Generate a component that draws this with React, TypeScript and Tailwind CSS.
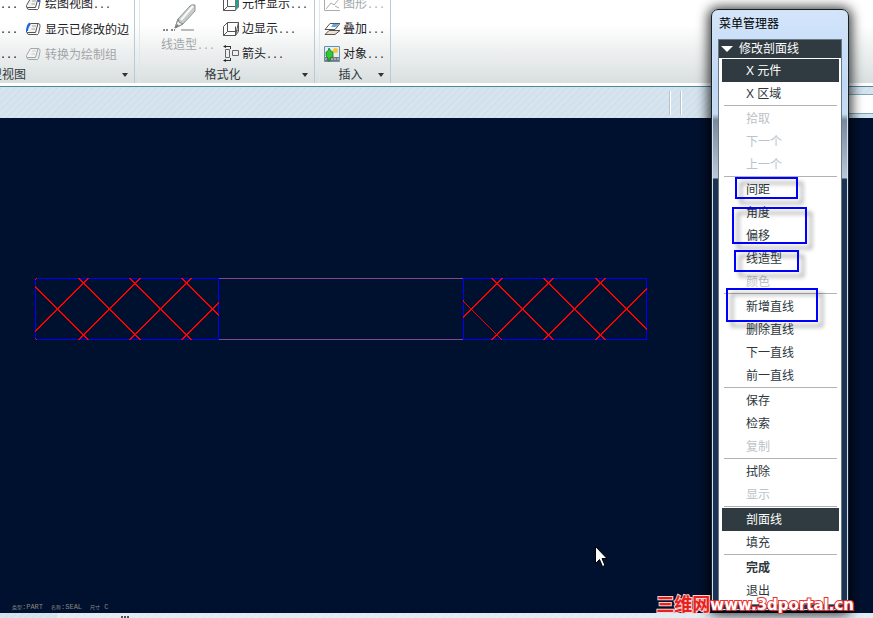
import React from "react";

const hatch =
  "bg-[repeating-linear-gradient(135deg,#d2e1eb_0px,#d2e1eb_3px,#d7e5ee_3px,#d7e5ee_5px)]";

function Dots() {
  return <span className="font-['Liberation_Mono',monospace] text-[10px]">...</span>;
}

function SheetIcon({ accent = "none" }: { accent?: "none" | "edge" | "plus" }) {
  return (
    <svg width="16" height="16" viewBox="0 0 16 16" fill="none" stroke={accent === "none" ? "#a1a6a8" : "#555"} aria-hidden="true">
      <path d="M4.500 2.500H12L9.500 11.500H1.500q-1.500 0-1-2z" fill="#f4f4f4" />
      <path d="M12 2.500q2.500 0 2 3l-1.500 7q-1 2-3 1M1 11q0 2.500 2 2.500h7" />
      <path d="M6 5h4M5.500 8H9" opacity=".5" />
      {accent === "edge" && <path d="M4 2.500Q1.500 3.500 1 10" stroke="#1667ee" strokeWidth="2" />}
      {accent === "plus" && <path d="M13 0v6M10 3h6" stroke="#2466dd" strokeWidth="2" />}
    </svg>
  );
}

function CubeIcon({ shaded = false }: { shaded?: boolean }) {
  return (
    <svg width="16" height="16" viewBox="0 0 16 16" fill="none" stroke="#555" aria-hidden="true">
      {shaded ? (
        <>
          <path d="M.5 2.500h12v12H.5zM4.500 0v10.500h8M.5 14.500l4-4" />
          <path d="M12.500 2l3-2v11l-3 3z" fill="#15a39a" stroke="#777" />
        </>
      ) : (
        <>
          <path d="M4.500 1.500h11L12.500 14.500H.5v-9z" fill="#fff" />
          <path d="M4.500 1.500v9h8l3-1M4.500 10.500l-4 4M12.500 5.500v9M15.500 1.500v9l-3 4" />
        </>
      )}
    </svg>
  );
}

function ArrowsIcon() {
  return (
    <svg width="16" height="17" viewBox="0 0 16 17" fill="none" stroke="#666" aria-hidden="true">
      <path d="M2.500 4.500h4v8h-4zM9.500 5.500h6v5h-6z" fill="#eee" />
      <path d="M1 1.500h6M1 15.500h6M7.500 1v3M7.500 13v3" stroke="#333" />
      <path d="M0 1.500L3 0v3zM0 15.500L3 14v3z" fill="#222" stroke="none" />
    </svg>
  );
}

function GraphIcon() {
  return (
    <svg width="16" height="16" viewBox="0 0 16 16" fill="none" stroke="#a8acaf" aria-hidden="true">
      <path d="M.5 0v14.500H16M2 13l5-6 3 2 5-6M11 10l4 2" />
    </svg>
  );
}

function OverlayIcon() {
  return (
    <svg width="16" height="16" viewBox="0 0 16 16" fill="none" stroke="#555" aria-hidden="true">
      <path d="M5 9.500h11l-5 4H1z" fill="#f1ded1" />
      <path d="M6 2.500h10L11 8.500H1z" fill="#fff" />
      <path d="M9 3h6l-3 3H7z" fill="#65a9e4" stroke="none" />
    </svg>
  );
}

function PictureIcon() {
  return (
    <svg width="16" height="16" viewBox="0 0 16 16" aria-hidden="true">
      <path d="M.5.5h15v15H.5z" fill="#dbeefa" stroke="#6b8dae" />
      <path d="M1 11h14v4H1z" fill="#777" />
      <path d="M1 13h14" stroke="#ddd" strokeDasharray="2 1" />
      <circle cx="11.500" cy="4.500" r="2.500" fill="#ffc42b" />
      <path d="M5 2l2 3 2 1v5l-3 1v3H4v-3L2 10V6l2-1z" fill="#32c832" stroke="#146819" strokeWidth=".7" />
    </svg>
  );
}

function PencilIcon() {
  return (
    <svg width="36" height="30" viewBox="0 0 36 30" aria-hidden="true">
      <path d="M2 27h6M10 27h4" stroke="#888" strokeWidth="2" strokeDasharray="2 1" />
      <path d="M20 27h13" stroke="#bbb" strokeWidth="2" />
      <path d="M14 25l3-9L29 3q2-2 5-1v6L22 21z" fill="#c8cbcb" stroke="#929696" />
      <path d="M20 17L32 3" stroke="#fafafa" strokeWidth="2" />
      <path d="M17 16l1 3 4 2-8 4z" fill="#eee" stroke="#888" />
      <path d="M14 25l4-2-2-2z" fill="#777" />
    </svg>
  );
}

function RibbonButton({ icon, label, dots = true, disabled = false }: {
  icon: React.ReactNode; label: string; dots?: boolean; disabled?: boolean;
}) {
  return (
    <button
      disabled={disabled}
      className="flex h-[25px] shrink-0 items-center gap-[3px] whitespace-nowrap text-[#1c2226] disabled:text-[#a1a6a8]"
    >
      {icon}
      <span className="pt-[2px]">{label}{dots && <Dots />}</span>
    </button>
  );
}

function GroupFooter({ label }: { label: string }) {
  return (
    <button className="flex h-[17px] w-full shrink-0 items-center pr-[6px] text-[#30373b]">
      <span className="flex-1 pl-[3px] text-center">{label}</span>
      <span className="border-x-[3px] border-t-4 border-x-transparent border-t-[#333]" />
    </button>
  );
}

const groupClass =
  "flex shrink-0 flex-col justify-end overflow-hidden border-r border-[#bacbd5]";

function Ribbon() {
  return (
    <header className="flex h-[83px] gap-1 overflow-hidden bg-linear-to-b from-white from-30% to-[#d9dfdf]">
      <section className={`${groupClass} w-[135px]`}>
        <div className="flex gap-[10px]">
          <div className="flex w-4 flex-col">
            {[0, 1, 2].map((i) => (
              <button key={i} aria-label="更多" className="h-[25px] pt-[2px] text-left"><Dots /></button>
            ))}
          </div>
          <div className="flex flex-col">
            <RibbonButton icon={<SheetIcon accent="plus" />} label="绘图视图" />
            <RibbonButton icon={<SheetIcon accent="edge" />} label="显示已修改的边" dots={false} />
            <RibbonButton icon={<SheetIcon />} label="转换为绘制组" dots={false} disabled />
          </div>
        </div>
        <button className="flex h-[17px] shrink-0 items-center justify-between pr-[6px] text-[#30373b]">
          <span className="-ml-[10px]">型视图</span>
          <span className="border-x-[3px] border-t-4 border-x-transparent border-t-[#333]" />
        </button>
      </section>
      <section className={`${groupClass} w-[176px] border-l border-l-[#e0e7eb]`}>
        <div className="flex justify-between pr-[6px] pl-[21px]">
          <button disabled className="flex flex-col items-start justify-end pb-[10px] leading-[18px] whitespace-nowrap text-[#a1a6a8]">
            <PencilIcon />
            <span className="pt-[3px]">线造型<Dots /></span>
          </button>
          <div className="flex flex-col">
            <RibbonButton icon={<CubeIcon shaded />} label="元件显示" />
            <RibbonButton icon={<CubeIcon />} label="边显示" />
            <RibbonButton icon={<ArrowsIcon />} label="箭头" />
          </div>
        </div>
        <GroupFooter label="格式化" />
      </section>
      <section className={`${groupClass} w-[72px] border-l border-l-[#e0e7eb]`}>
        <div className="flex flex-col pl-1">
          <RibbonButton icon={<GraphIcon />} label="图形" disabled />
          <RibbonButton icon={<OverlayIcon />} label="叠加" />
          <RibbonButton icon={<PictureIcon />} label="对象" />
        </div>
        <GroupFooter label="插入" />
      </section>
    </header>
  );
}

function Section({ id, x, width, centers }: { id: string; x: number; width: number; centers: number[] }) {
  return (
    <g fill="none">
      <clipPath id={id}><rect x={x} y="0" width={width} height="62" /></clipPath>
      <rect x={x + 0.5} y="0.5" width={width - 1} height="61" stroke="#0000ff" />
      <g clipPath={`url(#${id})`} stroke="#ff0000">
        {centers.map((c) => (
          <path key={c} d={`M${c - 40} -9l80 80M${c + 40} -9l-80 80`} />
        ))}
      </g>
    </g>
  );
}

function Drawing() {
  return (
    <svg width="613" height="62" viewBox="0 0 613 62" shapeRendering="crispEdges" role="img" aria-label="剖面图">
      <path d="M184 .5h244M184 61.500h244" stroke="#804a90" />
      <Section id="left-section" x={0} width={184} centers={[-29.2, 22.7, 74.3, 125.7, 177.7]} />
      <Section id="right-section" x={428} width={184} centers={[436.3, 487.7, 539.7, 591.3]} />
    </svg>
  );
}

type Item = { label: string; off?: boolean; active?: boolean; bold?: boolean };
const menu: Item[][] = [
  [{ label: "X 元件", active: true }, { label: "X 区域" }],
  [{ label: "拾取", off: true }, { label: "下一个", off: true }, { label: "上一个", off: true }],
  [{ label: "间距" }, { label: "角度" }, { label: "偏移" }, { label: "线造型" }, { label: "颜色", off: true }],
  [{ label: "新增直线" }, { label: "删除直线" }, { label: "下一直线" }, { label: "前一直线" }],
  [{ label: "保存" }, { label: "检索" }, { label: "复制", off: true }],
  [{ label: "拭除" }, { label: "显示", off: true }],
  [{ label: "剖面线", active: true }, { label: "填充" }],
  [{ label: "完成", bold: true }, { label: "退出" }],
];

const callout = "pointer-events-none absolute border-2 border-[#0000ff] drop-shadow-[5px_5px_2px_rgba(0,0,0,0.4)]";

function MenuManager() {
  return (
    <aside className="absolute top-[9px] right-6 w-[138px] rounded-[7px] border border-[#12202e] bg-[linear-gradient(180deg,#d3e5fa_0px,#bdd8f7_75px,#c5dcf5_104px,#78899f_110px,#b9c8da_168px,#1b3453_169px,#1b3453_100%)] px-[6px] pb-[5px] shadow-[0_1px_12px_3px_rgba(0,0,0,0.75)] ring-1 ring-[#d5e0e8] ring-inset">
      <h1 className="h-[29px] pl-[1px] leading-[29px] text-black">菜单管理器</h1>
      <div className="border border-[#6c7882] bg-[#303b41]">
        <h2 className="flex h-[18px] items-center gap-[6px] pl-[2px] text-white">
          <span className="border-x-[6px] border-t-[6px] border-x-transparent border-t-white" />
          修改剖面线
        </h2>
        <nav className="bg-white pt-[1px] pr-[2px] pb-[2px] pl-[3px]">
          {menu.map((group, gi) => (
            <div key={gi}>
              {gi > 0 && <hr className="mx-[2px] h-[2px] border-0 border-t border-[#b2b2b2]" />}
              {group.map((item) => (
                <button
                  key={item.label}
                  disabled={item.off}
                  className={`block h-[23px] w-full pl-6 text-left leading-[25px] ${
                    item.active ? "bg-[#303b41] text-white" : item.off ? "text-[#bcc3c8]" : "text-[#2d373d]"
                  } ${item.bold ? "font-bold" : ""}`}
                >
                  {item.label}
                </button>
              ))}
            </div>
          ))}
        </nav>
      </div>
      <span className={`${callout} top-[167px] left-[23px] h-[22px] w-[63px]`} />
      <span className={`${callout} top-[197px] left-5 h-[37px] w-[75px]`} />
      <span className={`${callout} top-[240px] left-[22px] h-[22px] w-[65px]`} />
      <span className={`${callout} top-[278px] left-[14px] h-[34px] w-[92px]`} />
    </aside>
  );
}

export default function App() {
  return (
    <div className="relative flex min-h-screen flex-col overflow-hidden bg-white font-['Liberation_Sans','Noto_Sans_CJK_SC',sans-serif] text-[12px] leading-[18px]">
      <Ribbon />
      <div className={`mt-[3px] flex h-8 items-center border-t border-[#4d86a3] ${hatch}`}>
        <div className="ml-auto flex h-6 gap-[9px] pr-[131px]">
          <span className="w-[2px] border-r border-l border-r-white border-l-[#b4c4ce]" />
          <span className="w-[2px] border-r border-l border-r-white border-l-[#b4c4ce]" />
        </div>
        <input aria-label="搜索" className="mt-[3px] h-5 w-[60px] border-y border-[#7ba7bc] bg-white" />
      </div>
      <main className="flex flex-1 flex-col justify-between bg-[#00112f] pt-40 pl-[35px]">
        <Drawing />
        <p className="-ml-[23px] flex gap-2 font-['Liberation_Mono','Noto_Sans_CJK_SC',monospace] text-[7px] leading-[10px] text-[#8b867e]">
          <span><span className="text-[5px]">类型</span>:PART</span>
          <span><span className="text-[5px]">名称</span>:SEAL</span>
          <span><span className="text-[5px]">尺寸</span> C</span>
        </p>
      </main>
      <footer className={`flex h-[5px] pl-[57px] ${hatch}`}>
        <div className="flex-1 bg-white/30 pt-[3px] pl-16"><span className="block w-2 border-t-2 border-dotted border-[#55504a]" /></div>
      </footer>
      <MenuManager />
      <svg className="absolute right-[266px] bottom-[50px]" width="12" height="22" viewBox="0 0 12 22" aria-hidden="true">
        <path d="M.5.5v17l4-4 3 7 2.500-1-3-7H12z" fill="#fff" stroke="#000" />
      </svg>
      <a
        href="#top"
        className="absolute right-[19px] bottom-1 flex items-center font-['DejaVu_Sans','Noto_Sans_CJK_SC',sans-serif] text-[15px] leading-[18px] font-bold whitespace-nowrap"
      >
        <span className="text-[18px] text-[#e8201e] [paint-order:stroke_fill] [-webkit-text-stroke:2px_#ffd0cc]">三维网</span>
        <span className="text-white [paint-order:stroke_fill] [-webkit-text-stroke:2px_#e8302e]">www.3dportal.cn</span>
      </a>
    </div>
  );
}
